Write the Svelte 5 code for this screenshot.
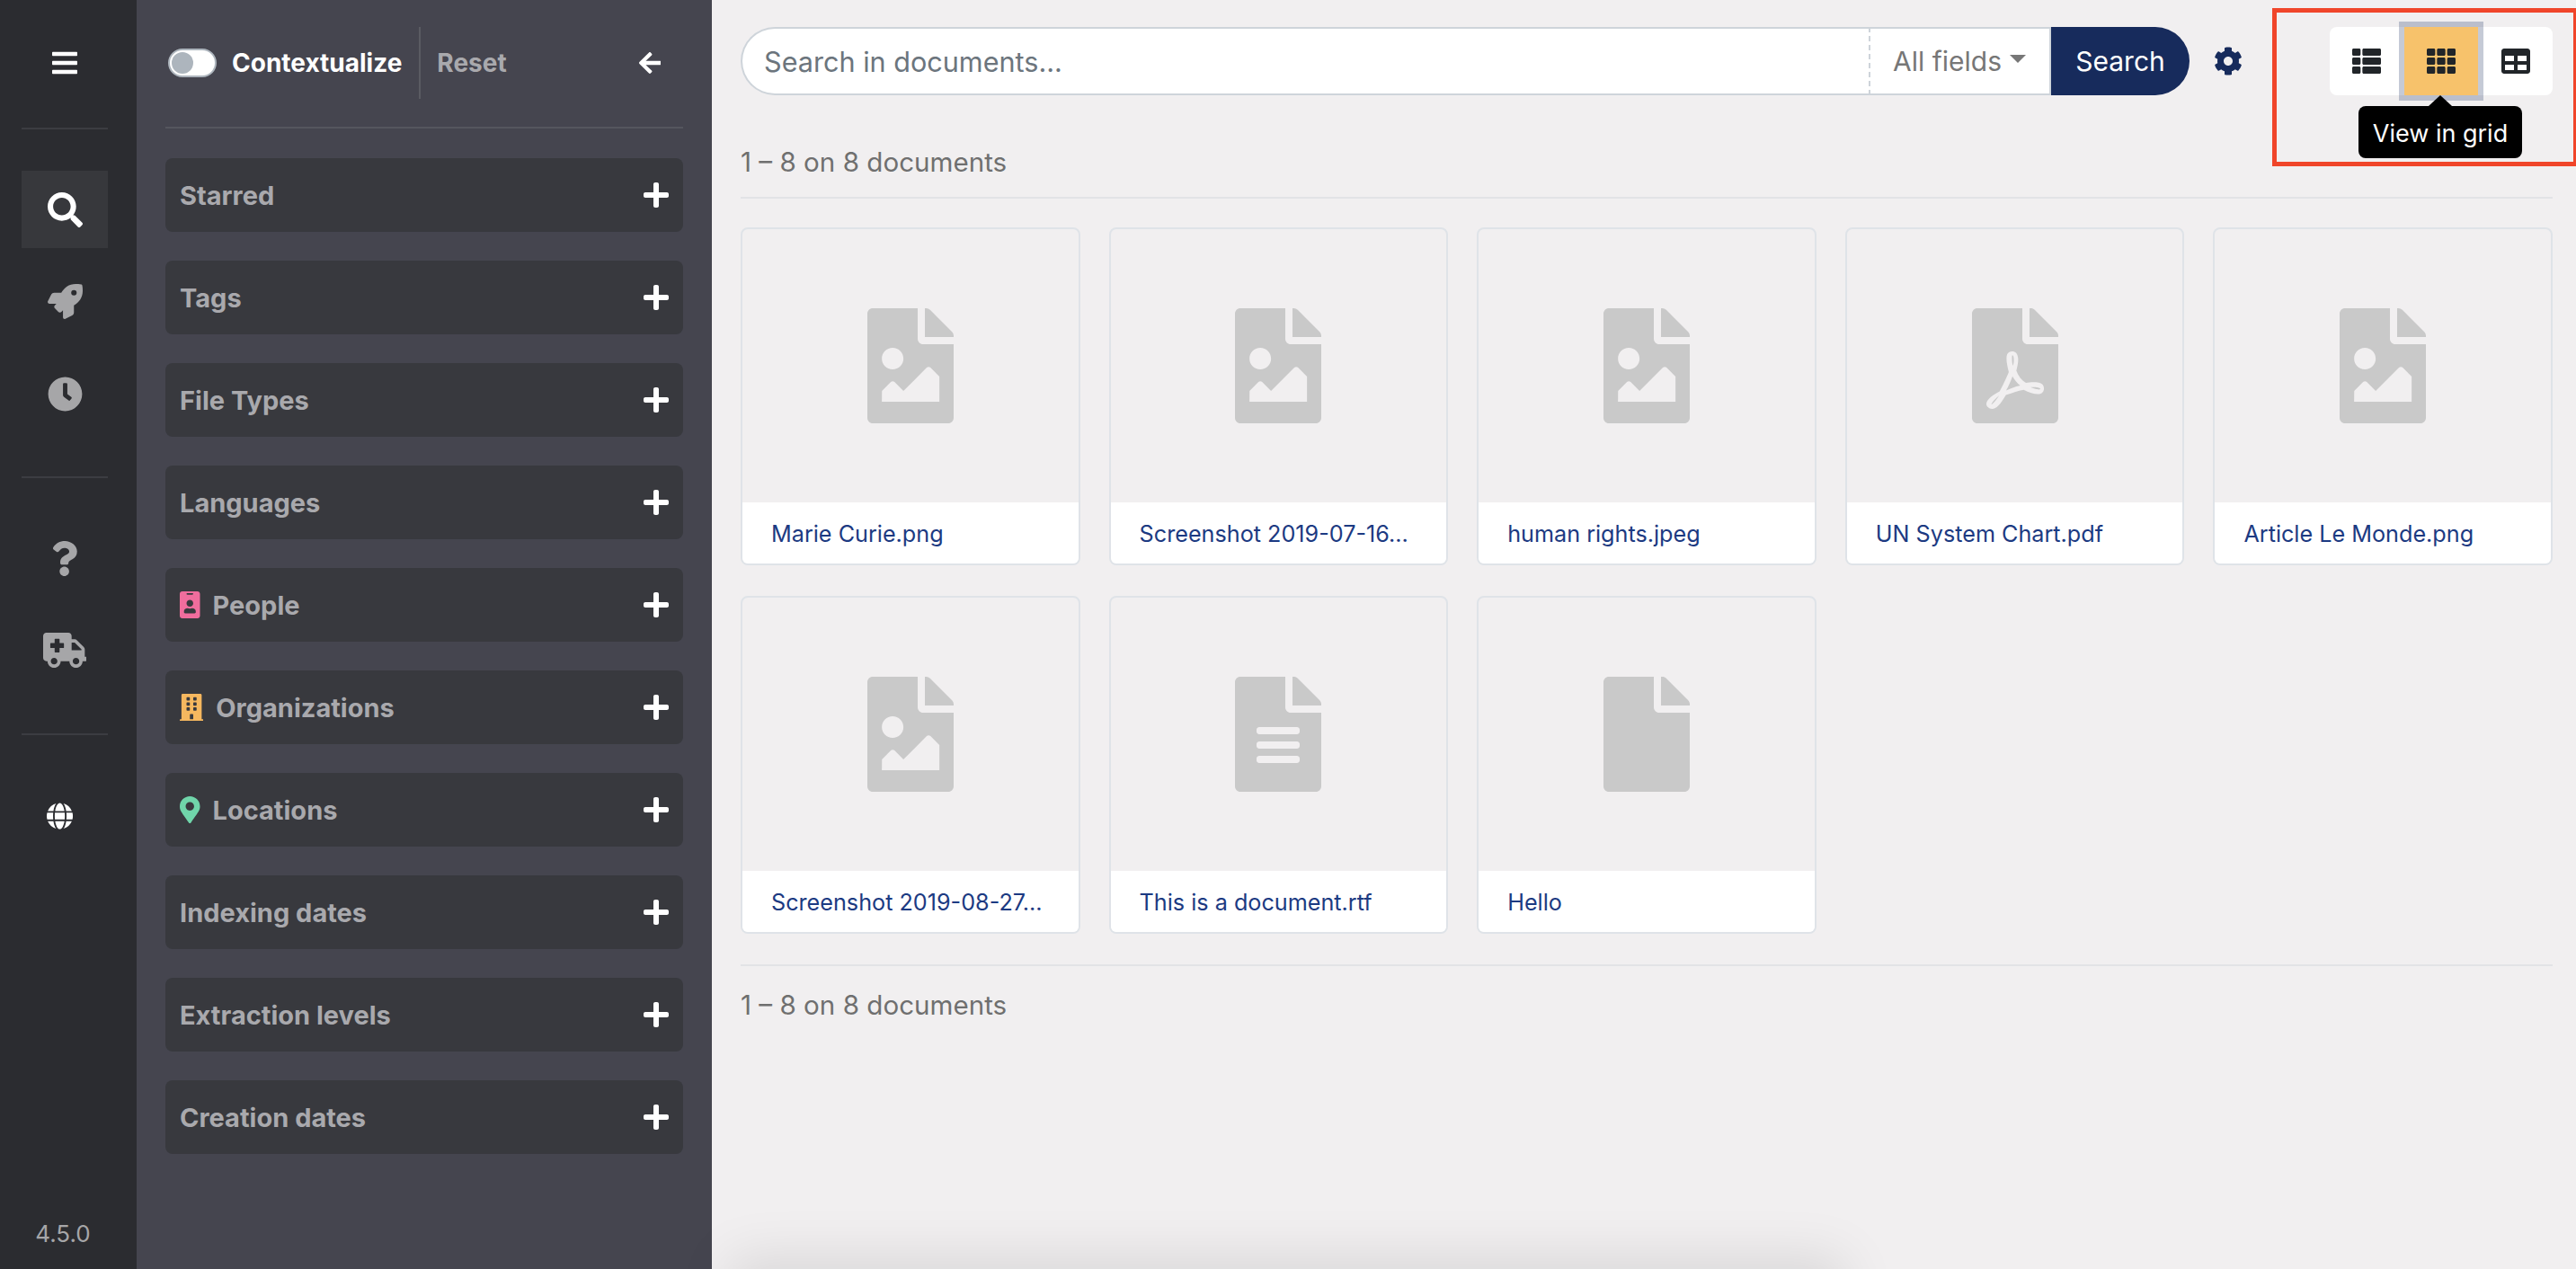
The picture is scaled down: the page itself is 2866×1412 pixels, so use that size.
<script>
  const icons = {
    bars: [448, "M16 132h416c8.837 0 16-7.163 16-16V76c0-8.837-7.163-16-16-16H16C7.163 60 0 67.163 0 76v40c0 8.837 7.163 16 16 16zm0 160h416c8.837 0 16-7.163 16-16v-40c0-8.837-7.163-16-16-16H16c-8.837 0-16 7.163-16 16v40c0 8.837 7.163 16 16 16zm0 160h416c8.837 0 16-7.163 16-16v-40c0-8.837-7.163-16-16-16H16c-8.837 0-16 7.163-16 16v40c0 8.837 7.163 16 16 16z"],
    search: [512, "M505 442.7L405.3 343c-4.5-4.5-10.6-7-17-7H372c27.6-35.3 44-79.7 44-128C416 93.1 322.9 0 208 0S0 93.1 0 208s93.1 208 208 208c48.3 0 92.7-16.4 128-44v16.3c0 6.4 2.5 12.5 7 17l99.7 99.7c9.4 9.4 24.6 9.4 33.9 0l28.3-28.3c9.4-9.4 9.4-24.6.1-34zM208 336c-70.7 0-128-57.2-128-128 0-70.7 57.2-128 128-128 70.7 0 128 57.2 128 128 0 70.7-57.2 128-128 128z"],
    rocket: [512, "M505.12 19.09c-1.19-5.53-6.66-11-12.21-12.19C460.72 0 435.51 0 410.41 0 307.18 0 245.27 55.2 199.05 128H94.84c-16.35.02-35.56 11.88-42.89 26.48L2.52 253.3A28.4 28.4 0 0 0 0 264a24.01 24.01 0 0 0 24.01 24h103.81l-22.47 22.47c-11.37 11.36-13 32.26 0 45.25l50.9 50.91c11.16 11.19 32.16 13.16 45.28 0l22.47-22.47V488a24.01 24.01 0 0 0 24.01 24 28.56 28.56 0 0 0 10.71-2.52l98.73-49.39c14.63-7.3 26.51-26.5 26.51-42.86V312.8c72.6-46.31 128.03-108.41 128.03-211.09.01-25.21.01-50.41-6.95-82.62zM384.04 168a40 40 0 1 1 40.01-40 40.02 40.02 0 0 1-40.01 40z"],
    clock: [512, "M256 8C119 8 8 119 8 256s111 248 248 248 248-111 248-248S393 8 256 8zm92.49 313l-20 25a16 16 0 0 1-22.49 2.5l-67-49.72a40 40 0 0 1-15-31.23V112a16 16 0 0 1 16-16h32a16 16 0 0 1 16 16v144l58 42.5a16 16 0 0 1 2.49 22.5z"],
    question: [384, "M202.021 0C122.202 0 70.503 32.703 29.914 91.026c-7.363 10.58-5.093 25.086 5.178 32.874l43.138 32.709c10.373 7.865 25.132 6.026 33.253-4.148 25.049-31.381 43.63-49.449 82.757-49.449 30.764 0 68.816 19.799 68.816 49.631 0 22.552-18.617 34.134-48.993 51.164-35.423 19.86-82.299 44.576-82.299 106.405V320c0 13.255 10.745 24 24 24h72.471c13.255 0 24-10.745 24-24v-5.773c0-42.86 125.268-44.645 125.268-160.627C377.504 66.256 286.902 0 202.021 0zM192 373.459c-38.196 0-69.271 31.075-69.271 69.271 0 38.195 31.075 69.27 69.271 69.27s69.271-31.075 69.271-69.271-31.075-69.27-69.271-69.27z"],
    ambulance: [640, "M624 352h-16V243.9c0-12.7-5.1-24.9-14.1-33.9L494 110.1c-9-9-21.2-14.1-33.9-14.1H416V48c0-26.5-21.5-48-48-48H48C21.5 0 0 21.5 0 48v320c0 26.5 21.5 48 48 48h16c0 53 43 96 96 96s96-43 96-96h128c0 53 43 96 96 96s96-43 96-96h48c8.8 0 16-7.2 16-16v-32c0-8.8-7.2-16-16-16zM160 464c-26.5 0-48-21.5-48-48s21.5-48 48-48 48 21.5 48 48-21.5 48-48 48zm144-248c0 4.4-3.6 8-8 8h-56v56c0 4.4-3.6 8-8 8h-56c-4.4 0-8-3.6-8-8v-56h-56c-4.4 0-8-3.6-8-8v-56c0-4.4 3.6-8 8-8h56v-56c0-4.4 3.6-8 8-8h56c4.4 0 8 3.6 8 8v56h56c4.4 0 8 3.6 8 8v56zm176 248c-26.5 0-48-21.5-48-48s21.5-48 48-48 48 21.5 48 48-21.5 48-48 48zm80-208H416V144h44.1l99.9 99.9V256z"],
    globe: [496, "M336.5 160C322 70.7 287.8 8 248 8s-74 62.7-88.5 152h177zM152 256c0 22.2 1.2 43.5 3.3 64h185.3c2.1-20.5 3.3-41.8 3.3-64s-1.2-43.5-3.3-64H155.3c-2.1 20.5-3.3 41.8-3.3 64zm324.7-96c-28.6-67.9-86.5-120.4-158-141.6 24.4 33.8 41.2 84.7 50 141.6h108zM177.2 18.4C105.8 39.6 47.8 92.1 19.3 160h108c8.7-56.9 25.5-107.8 49.9-141.6zM487.4 192H372.7c2.1 21 3.3 42.5 3.3 64s-1.2 43-3.3 64h114.6c5.5-20.5 8.6-41.8 8.6-64s-3.1-43.5-8.5-64zM120 256c0-21.5 1.2-43 3.3-64H8.6C3.2 212.5 0 233.8 0 256s3.2 43.5 8.6 64h114.6c-2-21-3.2-42.5-3.2-64zm39.5 96c14.5 89.3 48.7 152 88.5 152s74-62.7 88.5-152h-177zm159.3 141.6c71.4-21.2 129.4-73.7 158-141.6h-108c-8.8 56.9-25.6 107.8-50 141.6zM19.3 352c28.6 67.9 86.5 120.4 158 141.6-24.4-33.8-41.2-84.7-50-141.6h-108z"],
    plus: [448, "M416 208H272V64c0-17.67-14.33-32-32-32h-32c-17.67 0-32 14.33-32 32v144H32c-17.67 0-32 14.33-32 32v32c0 17.67 14.33 32 32 32h144v144c0 17.67 14.33 32 32 32h32c17.67 0 32-14.33 32-32V304h144c17.67 0 32-14.33 32-32v-32c0-17.67-14.33-32-32-32z"],
    arrow: [448, "M257.5 445.1l-22.2 22.2c-9.4 9.4-24.6 9.4-33.9 0L7 273c-9.4-9.4-9.4-24.6 0-33.9L201.4 44.7c9.4-9.4 24.6-9.4 33.9 0l22.2 22.2c9.5 9.5 9.3 25-.4 34.3L136.6 216H424c13.3 0 24 10.7 24 24v32c0 13.3-10.7 24-24 24H136.6l120.5 114.8c9.8 9.3 10 24.8.4 34.3z"],
    cog: [512, "M487.4 315.7l-42.6-24.6c4.3-23.2 4.3-47 0-70.2l42.6-24.6c4.9-2.8 7.1-8.6 5.5-14-11.1-35.6-30-67.8-54.7-94.6-3.8-4.1-10-5.1-14.8-2.3L380.8 110c-17.9-15.4-38.5-27.3-60.8-35.1V25.8c0-5.6-3.9-10.5-9.4-11.7-36.7-8.2-74.3-7.8-109.2 0-5.5 1.2-9.4 6.1-9.4 11.7V75c-22.2 7.9-42.8 19.8-60.8 35.1L88.7 85.5c-4.9-2.8-11-1.9-14.8 2.3-24.7 26.7-43.6 58.9-54.7 94.6-1.7 5.4.6 11.2 5.5 14L67.3 221c-4.3 23.2-4.3 47 0 70.2l-42.6 24.6c-4.9 2.8-7.1 8.6-5.5 14 11.1 35.6 30 67.8 54.7 94.6 3.8 4.1 10 5.1 14.8 2.3l42.6-24.6c17.9 15.4 38.5 27.3 60.8 35.1v49.2c0 5.6 3.9 10.5 9.4 11.7 36.7 8.2 74.3 7.8 109.2 0 5.5-1.2 9.4-6.1 9.4-11.7v-49.2c22.2-7.9 42.8-19.8 60.8-35.1l42.6 24.6c4.9 2.8 11 1.9 14.8-2.3 24.7-26.7 43.6-58.9 54.7-94.6 1.5-5.5-.7-11.3-5.6-14.1zM256 336c-44.1 0-80-35.9-80-80s35.9-80 80-80 80 35.9 80 80-35.9 80-80 80z"],
    list: [512, "M149.333 216v80c0 13.255-10.745 24-24 24H24c-13.255 0-24-10.745-24-24v-80c0-13.255 10.745-24 24-24h101.333c13.255 0 24 10.745 24 24zM0 376v80c0 13.255 10.745 24 24 24h101.333c13.255 0 24-10.745 24-24v-80c0-13.255-10.745-24-24-24H24c-13.255 0-24 10.745-24 24zM125.333 32H24C10.745 32 0 42.745 0 56v80c0 13.255 10.745 24 24 24h101.333c13.255 0 24-10.745 24-24V56c0-13.255-10.745-24-24-24zm80 448H488c13.255 0 24-10.745 24-24v-80c0-13.255-10.745-24-24-24H205.333c-13.255 0-24 10.745-24 24v80c0 13.255 10.745 24 24 24zm-24-424v80c0 13.255 10.745 24 24 24H488c13.255 0 24-10.745 24-24V56c0-13.255-10.745-24-24-24H205.333c-13.255 0-24 10.745-24 24zm24 264H488c13.255 0 24-10.745 24-24v-80c0-13.255-10.745-24-24-24H205.333c-13.255 0-24 10.745-24 24v80c0 13.255 10.745 24 24 24z"],
    grid: [512, "M149.333 56v80c0 13.255-10.745 24-24 24H24c-13.255 0-24-10.745-24-24V56c0-13.255 10.745-24 24-24h101.333c13.255 0 24 10.745 24 24zm181.334 240v-80c0-13.255-10.745-24-24-24H205.333c-13.255 0-24 10.745-24 24v80c0 13.255 10.745 24 24 24h101.333c13.256 0 24.001-10.745 24.001-24zm32-240v80c0 13.255 10.745 24 24 24H488c13.255 0 24-10.745 24-24V56c0-13.255-10.745-24-24-24H386.667c-13.255 0-24 10.745-24 24zm-32 80V56c0-13.255-10.745-24-24-24H205.333c-13.255 0-24 10.745-24 24v80c0 13.255 10.745 24 24 24h101.333c13.256 0 24.001-10.745 24.001-24zm-205.334 56H24c-13.255 0-24 10.745-24 24v80c0 13.255 10.745 24 24 24h101.333c13.255 0 24-10.745 24-24v-80c0-13.255-10.745-24-24-24zM0 376v80c0 13.255 10.745 24 24 24h101.333c13.255 0 24-10.745 24-24v-80c0-13.255-10.745-24-24-24H24c-13.255 0-24 10.745-24 24zm386.667-56H488c13.255 0 24-10.745 24-24v-80c0-13.255-10.745-24-24-24H386.667c-13.255 0-24 10.745-24 24v80c0 13.255 10.745 24 24 24zm0 160H488c13.255 0 24-10.745 24-24v-80c0-13.255-10.745-24-24-24H386.667c-13.255 0-24 10.745-24 24v80c0 13.255 10.745 24 24 24zM181.333 376v80c0 13.255 10.745 24 24 24h101.333c13.255 0 24-10.745 24-24v-80c0-13.255-10.745-24-24-24H205.333c-13.255 0-24 10.745-24 24z"],
    table: [512, "M464 32H48C21.49 32 0 53.49 0 80v352c0 26.51 21.49 48 48 48h416c26.51 0 48-21.49 48-48V80c0-26.51-21.49-48-48-48zM224 416H64v-96h160v96zm0-160H64v-96h160v96zm224 160H288v-96h160v96zm0-160H288v-96h160v96z"],
    person: [384, "M336 0H48C21.5 0 0 21.5 0 48v416c0 26.5 21.5 48 48 48h288c26.5 0 48-21.5 48-48V48c0-26.5-21.5-48-48-48zM144 32h96c8.8 0 16 7.2 16 16s-7.2 16-16 16h-96c-8.8 0-16-7.2-16-16s7.2-16 16-16zm48 128c35.3 0 64 28.7 64 64s-28.7 64-64 64-64-28.7-64-64 28.7-64 64-64zm112 236.8c0 10.6-10 19.2-22.4 19.2H102.4C90 416 80 407.4 80 396.8v-19.2c0-31.8 30.1-57.6 67.2-57.6h5c12.3 5.1 25.7 8 39.8 8s27.6-2.9 39.8-8h5c37.1 0 67.2 25.8 67.2 57.6v19.2z"],
    building: [448, "M436 480h-20V24c0-13.255-10.745-24-24-24H56C42.745 0 32 10.745 32 24v456H12c-6.627 0-12 5.373-12 12v20h448v-20c0-6.627-5.373-12-12-12zM128 76c0-6.627 5.373-12 12-12h40c6.627 0 12 5.373 12 12v40c0 6.627-5.373 12-12 12h-40c-6.627 0-12-5.373-12-12V76zm0 96c0-6.627 5.373-12 12-12h40c6.627 0 12 5.373 12 12v40c0 6.627-5.373 12-12 12h-40c-6.627 0-12-5.373-12-12v-40zm52 148h-40c-6.627 0-12-5.373-12-12v-40c0-6.627 5.373-12 12-12h40c6.627 0 12 5.373 12 12v40c0 6.627-5.373 12-12 12zm76 160h-64v-84c0-6.627 5.373-12 12-12h40c6.627 0 12 5.373 12 12v84zm64-172c0 6.627-5.373 12-12 12h-40c-6.627 0-12-5.373-12-12v-40c0-6.627 5.373-12 12-12h40c6.627 0 12 5.373 12 12v40zm0-96c0 6.627-5.373 12-12 12h-40c-6.627 0-12-5.373-12-12v-40c0-6.627 5.373-12 12-12h40c6.627 0 12 5.373 12 12v40zm0-96c0 6.627-5.373 12-12 12h-40c-6.627 0-12-5.373-12-12V76c0-6.627 5.373-12 12-12h40c6.627 0 12 5.373 12 12v40z"],
    marker: [384, "M172.268 501.67C26.97 291.031 0 269.413 0 192 0 85.961 85.961 0 192 0s192 85.961 192 192c0 77.413-26.97 99.031-172.268 309.67-9.535 13.774-29.93 13.773-39.464 0zM192 272c44.183 0 80-35.817 80-80s-35.817-80-80-80-80 35.817-80 80 35.817 80 80 80z"],
    fileImage: [384, "M384 121.941V128H256V0h6.059a24 24 0 0 1 16.97 7.029l97.941 97.941a24.002 24.002 0 0 1 7.03 16.971zM248 160c-13.2 0-24-10.8-24-24V0H24C10.745 0 0 10.745 0 24v464c0 13.255 10.745 24 24 24h336c13.255 0 24-10.745 24-24V160H248zm-135.455 16c26.51 0 48 21.49 48 48s-21.49 48-48 48-48-21.49-48-48 21.491-48 48-48zm208 240h-256l.485-48.485L104.545 328c4.686-4.686 11.799-4.201 16.485.485L160.545 368 264.06 264.485c4.686-4.686 12.284-4.686 16.971 0L320.545 304v112z"],
    filePdf: [384, "M181.9 256.1c-5-16-4.9-46.9-2-46.9 8.4 0 7.6 36.9 2 46.9zm-1.7 47.2c-7.7 20.2-17.3 43.3-28.4 62.7 18.3-7 39-17.2 62.9-21.9-12.7-9.6-24.9-23.4-34.5-40.8zM86.1 428.1c0 .8 13.2-5.4 34.9-40.2-6.7 6.3-29.1 24.5-34.9 40.2zM248 160h136v328c0 13.3-10.7 24-24 24H24c-13.3 0-24-10.7-24-24V24C0 10.7 10.7 0 24 0h200v136c0 13.2 10.8 24 24 24zm-8 171.8c-20-12.2-33.3-29-42.7-53.8 4.5-18.5 11.6-46.6 6.2-64.2-4.7-29.4-42.4-26.5-47.8-6.8-5 18.3-.4 44.1 8.1 77-11.6 27.6-28.7 64.6-40.8 85.8-.1 0-.1.1-.2.1-27.1 13.9-73.6 44.5-54.5 68 5.6 6.9 16 10 21.5 10 17.9 0 35.7-18 61.1-61.8 25.8-8.5 54.1-19.1 79-23.2 21.7 11.8 47.1 19.5 64 19.5 29.2 0 31.2-32 19.7-43.4-13.9-13.6-54.3-9.7-73.6-7.2zM377 105L279 7c-4.5-4.5-10.6-7-17-7h-6v128h128v-6.1c0-6.3-2.5-12.4-7-16.9zm-74.1 255.3c4.1-2.7-2.5-11.9-42.8-9 37.1 15.8 42.8 9 42.8 9z"],
    fileAlt: [384, "M224 136V0H24C10.7 0 0 10.7 0 24v464c0 13.3 10.7 24 24 24h336c13.3 0 24-10.7 24-24V160H248c-13.2 0-24-10.8-24-24zm64 236c0 6.6-5.4 12-12 12H108c-6.6 0-12-5.4-12-12v-8c0-6.6 5.4-12 12-12h168c6.6 0 12 5.4 12 12v8zm0-64c0 6.6-5.4 12-12 12H108c-6.6 0-12-5.4-12-12v-8c0-6.6 5.4-12 12-12h168c6.6 0 12 5.4 12 12v8zm0-72v8c0 6.6-5.4 12-12 12H108c-6.6 0-12-5.4-12-12v-8c0-6.6 5.4-12 12-12h168c6.6 0 12 5.4 12 12zm96-114.1v6.1H256V0h6.1c6.4 0 12.5 2.5 17 7l97.9 98c4.5 4.5 7 10.6 7 16.9z"],
    file: [384, "M224 136V0H24C10.7 0 0 10.7 0 24v464c0 13.3 10.7 24 24 24h336c13.3 0 24-10.7 24-24V160H248c-13.2 0-24-10.8-24-24zm160-14.1v6.1H256V0h6.1c6.4 0 12.5 2.5 17 7l97.9 98c4.5 4.5 7 10.6 7 16.9z"]
  };

  const filters = [
    { label: "Starred" },
    { label: "Tags" },
    { label: "File Types" },
    { label: "Languages" },
    { label: "People", icon: "person", cls: "people" },
    { label: "Organizations", icon: "building", cls: "orgs" },
    { label: "Locations", icon: "marker", cls: "locs" },
    { label: "Indexing dates" },
    { label: "Extraction levels" },
    { label: "Creation dates" }
  ];

  const documents = [
    { name: "Marie Curie.png", icon: "fileImage" },
    { name: "Screenshot 2019-07-16…", icon: "fileImage" },
    { name: "human rights.jpeg", icon: "fileImage" },
    { name: "UN System Chart.pdf", icon: "filePdf" },
    { name: "Article Le Monde.png", icon: "fileImage" },
    { name: "Screenshot 2019-08-27…", icon: "fileImage" },
    { name: "This is a document.rtf", icon: "fileAlt" },
    { name: "Hello", icon: "file" }
  ];
</script>

{#snippet fa(name)}
  <svg class="fa" viewBox="0 0 {icons[name][0]} 512" aria-hidden="true"><path d={icons[name][1]} /></svg>
{/snippet}

<div class="page">
  <nav class="menu">
    <div class="menu-top">
      <span class="menu-burger">{@render fa("bars")}</span>
    </div>
    <div class="menu-group">
      <span class="menu-item active">{@render fa("search")}</span>
      <span class="menu-item">{@render fa("rocket")}</span>
      <span class="menu-item">{@render fa("clock")}</span>
    </div>
    <div class="menu-group">
      <span class="menu-item">{@render fa("question")}</span>
      <span class="menu-item">{@render fa("ambulance")}</span>
    </div>
    <div class="menu-lang">
      <span class="menu-globe">{@render fa("globe")}</span>
    </div>
    <div class="version">4.5.0</div>
  </nav>

  <aside class="filters">
    <header class="filters-head">
      <span class="toggle"><span class="knob"></span></span>
      <span class="ctx">Contextualize</span>
      <span class="reset">Reset</span>
      <span class="back">{@render fa("arrow")}</span>
    </header>
    <div class="filter-list">
      {#each filters as filter}
        <div class="filter">
          {#if filter.icon}
            <span class="filter-icon {filter.cls}">{@render fa(filter.icon)}</span>
          {/if}
          <span class="filter-label">{filter.label}</span>
          <span class="plus">{@render fa("plus")}</span>
        </div>
      {/each}
    </div>
  </aside>

  <main class="content">
    <div class="toolbar">
      <form class="search">
        <input class="search-input" type="text" placeholder="Search in documents..." />
        <span class="field">All fields<i class="caret"></i></span>
        <button class="search-btn" type="button">Search</button>
      </form>
      <span class="settings">{@render fa("cog")}</span>
      <div class="views">
        <button class="view" type="button">{@render fa("list")}</button>
        <button class="view on" type="button">{@render fa("grid")}</button>
        <button class="view" type="button">{@render fa("table")}</button>
        <div class="tooltip">View in grid</div>
      </div>
    </div>

    <div class="count top">1 – 8 on 8 documents</div>

    <div class="grid">
      {#each documents as doc}
        <div class="card">
          <div class="thumb">{@render fa(doc.icon)}</div>
          <div class="title">{doc.name}</div>
        </div>
      {/each}
    </div>

    <div class="count bottom">1 – 8 on 8 documents</div>

    <div class="highlight"></div>
    <div class="below"></div>
  </main>
</div>

<style>
  :global(body) {
    margin: 0;
    overflow: hidden;
    background: #f1eff0;
  }

  .page {
    display: flex;
    height: 1412px;
    overflow: hidden;
    font-family: Inter, "Liberation Sans", sans-serif;
  }

  .fa {
    display: block;
    height: 1em;
    width: auto;
    fill: currentColor;
  }

  /* left menu */
  .menu {
    width: 152px;
    flex: none;
    box-sizing: border-box;
    padding: 0 32px 0 24px;
    background: #2b2c30;
    color: #a6a6a8;
    display: flex;
    flex-direction: column;
  }

  .menu-top {
    height: 142px;
    display: flex;
    justify-content: center;
    padding-top: 54px;
    box-sizing: border-box;
  }

  .menu-burger {
    font-size: 32px;
    color: #fff;
  }

  .menu-group {
    border-top: 2px solid #3c3d42;
    padding: 46px 0 49px;
    display: flex;
    flex-direction: column;
    gap: 16.5px;
  }

  .menu-item {
    height: 86px;
    display: flex;
    align-items: center;
    justify-content: center;
    font-size: 39px;
  }

  .menu-item.active {
    background: #37383c;
    color: #fff;
  }

  .menu-lang {
    border-top: 2px solid #3c3d42;
    padding-top: 75px;
    color: #fff;
    font-size: 30px;
  }

  .menu-globe {
    display: block;
    margin-left: 28px;
  }

  .version {
    margin-top: auto;
    margin-bottom: 26px;
    margin-left: -4px;
    font-size: 26px;
    line-height: 26px;
    text-align: center;
    color: #a6a6a8;
  }

  /* filters panel */
  .filters {
    width: 640px;
    flex: none;
    background: #45454f;
    padding: 0 32px;
    box-sizing: border-box;
    display: flex;
    flex-direction: column;
    gap: 33px;
  }

  .filters-head {
    height: 143px;
    box-sizing: border-box;
    padding: 30px 0 32px 3px;
    border-bottom: 2px solid #55565e;
    display: flex;
    align-items: center;
    font-size: 28px;
    font-weight: 700;
  }

  .toggle {
    width: 54px;
    height: 32px;
    box-sizing: border-box;
    border: 2px solid #adb5bd;
    border-radius: 16px;
    background: #fff;
    padding: 2px;
  }

  .knob {
    display: block;
    width: 24px;
    height: 24px;
    border-radius: 50%;
    background: #adb5bd;
  }

  .ctx {
    margin-left: 17px;
    color: #fff;
    padding-right: 19px;
    border-right: 2px solid #5a5b62;
    height: 80px;
    line-height: 80px;
  }

  .reset {
    margin-left: 18px;
    color: #a9a9ad;
    font-weight: 700;
  }

  .back {
    margin-left: auto;
    margin-right: 25px;
    color: #fff;
    font-size: 28px;
  }

  .filter-list {
    display: flex;
    flex-direction: column;
    gap: 32px;
  }

  .filter {
    height: 82px;
    box-sizing: border-box;
    padding: 0 16px;
    border-radius: 8px;
    background: #38393e;
    display: flex;
    align-items: center;
    color: #a9a9ad;
    font-size: 29px;
    font-weight: 700;
  }

  .filter-icon {
    font-size: 30px;
    margin-right: 14px;
  }

  .people {
    color: #f06d9d;
  }

  .orgs {
    color: #f6b85f;
  }

  .locs {
    color: #70d5aa;
  }

  .plus {
    margin-left: auto;
    color: #fff;
    font-size: 32px;
  }

  /* results */
  .content {
    position: relative;
    flex: 1;
    min-width: 0;
    padding: 30px 26px 0 32px;
    box-sizing: border-box;
  }

  .toolbar {
    display: flex;
    align-items: center;
    height: 76px;
  }

  .search {
    width: 1612px;
    height: 76px;
    display: flex;
    margin: 0;
  }

  .search-input {
    flex: 1;
    min-width: 0;
    padding: 0 24px;
    border: 2px solid #ced4da;
    border-right: 0;
    border-radius: 38px 0 0 38px;
    background: #fff;
    font: 400 30.6px Inter, "Liberation Sans", sans-serif;
    outline: none;
  }

  .search-input::placeholder {
    color: #6c757d;
    opacity: 1;
  }

  .field {
    width: 203px;
    box-sizing: border-box;
    padding-left: 25px;
    display: flex;
    align-items: center;
    background: #fff;
    border: 2px solid #ced4da;
    border-left: 2px dashed #ced4da;
    color: #777;
    font-size: 30px;
  }

  .caret {
    margin-left: 9px;
    margin-bottom: 5px;
    border-top: 9px solid #777;
    border-left: 9px solid transparent;
    border-right: 9px solid transparent;
  }

  .search-btn {
    width: 154px;
    border: 0;
    border-radius: 0 38px 38px 0;
    background: #172b5c;
    color: #fff;
    font: 400 30px Inter, "Liberation Sans", sans-serif;
  }

  .settings {
    margin-left: 27px;
    color: #172b5c;
    font-size: 32px;
  }

  .views {
    position: relative;
    margin-left: auto;
    width: 248px;
    height: 76px;
    display: flex;
    background: #fff;
    border-radius: 8px;
  }

  .view {
    flex: 1;
    border: 0;
    padding: 0;
    background: transparent;
    color: #212529;
    font-size: 32px;
    display: flex;
    align-items: center;
    justify-content: center;
  }

  .view.on {
    background: #f7c26b;
    box-shadow: 0 0 0 6px rgba(23, 43, 92, 0.25);
  }

  .tooltip {
    position: absolute;
    top: 88px;
    left: 32px;
    width: 182px;
    height: 58px;
    box-sizing: border-box;
    padding-top: 2px;
    border-radius: 8px;
    background: #000;
    color: #fff;
    font-size: 27px;
    display: flex;
    align-items: center;
    justify-content: center;
  }

  .tooltip::before {
    content: "";
    position: absolute;
    top: -12px;
    left: 78px;
    border-bottom: 12px solid #000;
    border-left: 13px solid transparent;
    border-right: 13px solid transparent;
  }

  .count {
    color: #6f6f6f;
    font-size: 29.6px;
    line-height: 34px;
  }

  .count.top {
    margin-top: 57px;
    padding-bottom: 22px;
    border-bottom: 2px solid #e2e3e6;
  }

  .count.bottom {
    margin-top: 34px;
    padding-top: 26px;
    border-top: 2px solid #e2e3e6;
  }

  .grid {
    display: grid;
    grid-template-columns: repeat(5, 1fr);
    gap: 34px 32px;
    margin-top: 32px;
  }

  .card {
    height: 376px;
    box-sizing: border-box;
    border: 2px solid #dfe3e8;
    border-radius: 8px;
    overflow: hidden;
    display: flex;
    flex-direction: column;
  }

  .thumb {
    flex: 1;
    display: flex;
    align-items: center;
    justify-content: center;
    color: #c9c9c9;
    font-size: 128px;
  }

  .title {
    height: 68px;
    flex: none;
    box-sizing: border-box;
    padding: 0 32px;
    background: #fff;
    color: #1c3a82;
    font-size: 25.2px;
    line-height: 70px;
    white-space: nowrap;
  }

  /* red annotation around the view switcher */
  .highlight {
    position: absolute;
    top: 9px;
    left: 1736px;
    width: 338px;
    height: 176px;
    box-sizing: border-box;
    border: 5px solid #f0452a;
    border-right-width: 3px;
    pointer-events: none;
  }

  /* shadow of a panel sitting just under the fold */
  .below {
    position: absolute;
    top: 1440px;
    left: 50px;
    width: 1180px;
    height: 60px;
    box-shadow: 0 -10px 60px 30px rgba(0, 0, 0, 0.1);
  }
</style>
